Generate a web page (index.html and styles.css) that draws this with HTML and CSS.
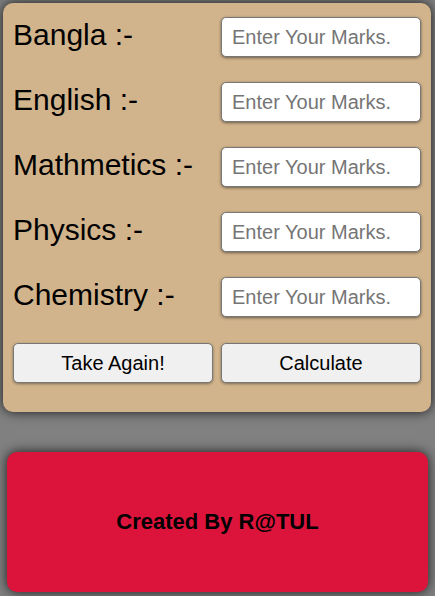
FILE: index.html
```html
<!DOCTYPE html>
<html>
<head>
    <title>Marks Calculator</title>
    <link rel="stylesheet" href="styles.css">
</head>
<body>
    <div class="box">
        <div class="row">
            <label for="bangla">Bangla :-</label>
            <input type="text" id="bangla" placeholder="Enter Your Marks.">
        </div>
        <div class="row">
            <label for="english">English :-</label>
            <input type="text" id="english" placeholder="Enter Your Marks.">
        </div>
        <div class="row">
            <label for="math">Mathmetics :-</label>
            <input type="text" id="math" placeholder="Enter Your Marks.">
        </div>
        <div class="row">
            <label for="physics">Physics :-</label>
            <input type="text" id="physics" placeholder="Enter Your Marks.">
        </div>
        <div class="row">
            <label for="chemistry">Chemistry :-</label>
            <input type="text" id="chemistry" placeholder="Enter Your Marks.">
        </div>
        <div class="row buttons">
            <button>Take Again!</button>
            <button>Calculate</button>
        </div>
    </div>

    <div class="footer">
        <h3>Created By R@TUL</h3>
    </div>
</body>
</html>
```

FILE: styles.css
```css
body {
    font-family: "Liberation Sans", Arial, sans-serif;
    background-color: #808080;
    margin: 0;
    padding: 3px 4px 4px 3px;
}
.box {
    background: tan;
    border-radius: 10px;
    padding: 14px 10px 29px 10px;
    box-shadow: 0 0 12px rgba(0,0,0,0.8);
    display: flex;
    flex-direction: column;
    gap: 25px;
}
.row {
    display: grid;
    grid-template-columns: minmax(0, 1fr) minmax(0, 1fr);
    column-gap: 8px;
    align-items: center;
}
label {
    font-size: 30px;
    color: #000;
    white-space: nowrap;
    padding-bottom: 4px;
}
input {
    width: 100%;
    height: 40px;
    box-sizing: border-box;
    padding: 0 10px;
    font-family: inherit;
    font-size: 20px;
    border: 1px solid #777;
    border-radius: 5px;
    box-shadow: 0 1px 3px rgba(0,0,0,0.5);
}
input::placeholder { color: #757575; }
.buttons { margin-top: 1px; }
button {
    height: 40px;
    font-family: inherit;
    font-size: 20px;
    color: #000;
    background: #f0f0f0;
    border: 1px solid #777;
    border-radius: 5px;
    box-shadow: 0 1px 3px rgba(0,0,0,0.4);
}
.footer {
    margin: 40px 3px 0 4px;
    height: 140px;
    background: crimson;
    border-radius: 10px;
    box-shadow: 0 0 12px rgba(0,0,0,0.8);
    display: flex;
    align-items: center;
    justify-content: center;
}
.footer h3 {
    margin: 0;
    font-size: 22px;
    color: #000;
}
```
